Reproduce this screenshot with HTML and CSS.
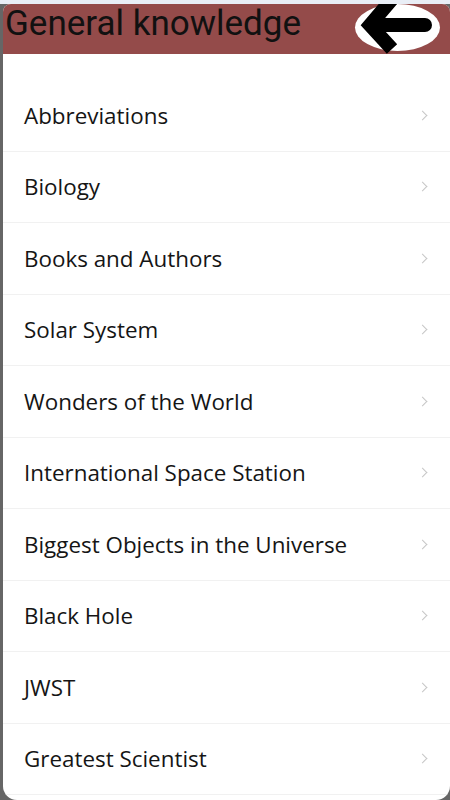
FILE: index.html
```html
<!DOCTYPE html>
<html lang="en">
<head>
  <meta charset="UTF-8" />
  <title>General knowledge</title>
  <link rel="stylesheet" href="styles.css">
</head>
<body>
  <div class="topstrip"></div>
  <div class="frame">
    <div class="card">
      <header class="bar">
        <h1>General knowledge</h1>
        <button class="back" title="Back">
          <svg width="85" height="47" viewBox="0 0 85 47">
            <path d="M70 21 H18 M38 -6 L15 21 L37 45" fill="none" stroke="#000" stroke-width="14" stroke-linecap="butt" stroke-linejoin="miter"/>
            <circle cx="70" cy="21" r="7" fill="#000"/>
          </svg>
        </button>
      </header>
      <ul class="topics">
        <li>Abbreviations <span class="chev"></span></li>
        <li>Biology <span class="chev"></span></li>
        <li>Books and Authors <span class="chev"></span></li>
        <li>Solar System <span class="chev"></span></li>
        <li>Wonders of the World <span class="chev"></span></li>
        <li>International Space Station <span class="chev"></span></li>
        <li>Biggest Objects in the Universe <span class="chev"></span></li>
        <li>Black Hole <span class="chev"></span></li>
        <li>JWST <span class="chev"></span></li>
        <li>Greatest Scientist <span class="chev"></span></li>
      </ul>
    </div>
  </div>
</body>
</html>
```

FILE: styles.css
```css
:root {
  --bar: #944b4a;
  --frame: #666666;
  --line: #f1f1f1;
  --chev: #c6c6c6;
}
* { box-sizing: border-box; margin: 0; padding: 0; }
html, body { height: 100%; }
body {
  background: var(--frame);
  display: flex;
  flex-direction: column;
  overflow: hidden;
}
.topstrip {
  height: 4px;
  background: #e9eef6;
}
.frame {
  flex: 1;
  padding-left: 3px;
  display: flex;
  flex-direction: column;
}
.card {
  flex: 1;
  background: #fff;
  border-radius: 8px 8px 14px 14px;
  overflow: hidden;
}
.bar {
  height: 50px;
  background: var(--bar);
  display: flex;
  align-items: flex-start;
  justify-content: space-between;
  padding: 0 10px 0 2px;
  overflow: hidden;
}
.bar h1 {
  font-family: Roboto, sans-serif;
  font-weight: 400;
  font-size: 35px;
  color: #111;
  line-height: 1;
  margin-top: 2px;
}
.back {
  width: 85px;
  height: 47px;
  border: none;
  border-radius: 50%;
  background: #fff;
  display: block;
  overflow: visible;
}
.back svg { display: block; overflow: visible; }
.topics {
  list-style: none;
  margin-top: 26px;
}
.topics li {
  height: 71.5px;
  border-bottom: 1px solid var(--line);
  display: flex;
  align-items: center;
  justify-content: space-between;
  padding: 0 22px 0 21px;
  font-family: "Open Sans", sans-serif;
  font-size: 22.4px;
  color: #151515;
}
.chev {
  width: 7px;
  height: 7px;
  border-top: 1.5px solid var(--chev);
  border-right: 1.5px solid var(--chev);
  transform: rotate(45deg);
  margin-right: 2px;
}
```
